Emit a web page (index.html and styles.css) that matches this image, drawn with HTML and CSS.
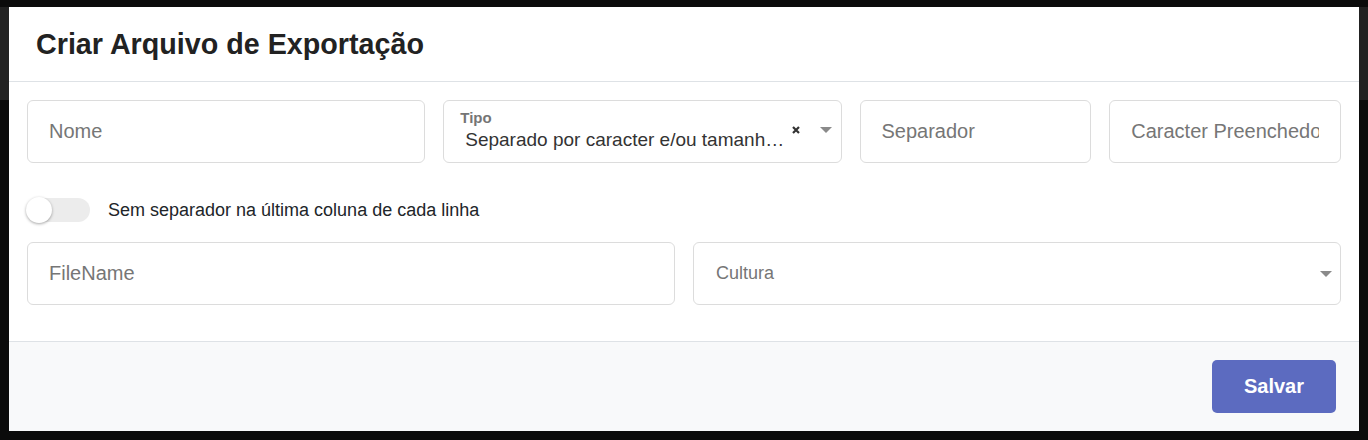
FILE: index.html
```html
<!DOCTYPE html>
<html lang="pt-BR">
<head>
<meta charset="utf-8">
<title>Criar Arquivo de Exportação</title>
<link rel="stylesheet" href="styles.css">
</head>
<body>
<div class="modal">
  <div class="modal-header">
    <h1 class="modal-title">Criar Arquivo de Exportação</h1>
  </div>
  <div class="modal-body">
    <div class="row">
      <div class="col c5"><input class="field input" type="text" placeholder="Nome"></div>
      <div class="col c5">
        <div class="field select">
          <div class="sel-main">
            <span class="sel-label">Tipo</span>
            <span class="sel-value">Separado por caracter e/ou tamanho fixo</span>
          </div>
          <svg class="sel-clear" width="8" height="8" viewBox="0 0 8 8"><path d="M1 1L7 7M7 1L1 7" stroke="#333" stroke-width="2.2"/></svg>
          <svg class="sel-arrow" width="12" height="6" viewBox="0 0 12 6"><path d="M0 0H12L6 6Z" fill="#8a8a8a"/></svg>
        </div>
      </div>
      <div class="col c3"><input class="field input" type="text" placeholder="Separador"></div>
      <div class="col c3"><input class="field input" type="text" placeholder="Caracter Preenchedor"></div>
    </div>
    <div class="switch-row">
      <span class="switch"><span class="knob"></span></span>
      <span class="switch-label">Sem separador na última coluna de cada linha</span>
    </div>
    <div class="row">
      <div class="col c8"><input class="field input" type="text" placeholder="FileName"></div>
      <div class="col c8">
        <div class="field select plain">
          <span class="sel-placeholder">Cultura</span>
          <svg class="sel-arrow" width="12" height="6" viewBox="0 0 12 6"><path d="M0 0H12L6 6Z" fill="#8a8a8a"/></svg>
        </div>
      </div>
    </div>
  </div>
  <div class="modal-footer">
    <button class="btn-primary" type="button">Salvar</button>
  </div>
</div>
</body>
</html>
```
FILE: styles.css
```css
* { box-sizing: border-box; }
html, body { height: 100%; }
body {
  margin: 0;
  overflow: hidden;
  font-family: "Liberation Sans", Arial, sans-serif;
  color: #212529;
  background: linear-gradient(to bottom, #0b0b0b 0, #0b0b0b 7px, #222 7px, #222 100px, #0b0b0b 100px);
}
.modal {
  margin: 7px 9px 0;
  width: 1350px;
  background: #fff;
}
.modal-header {
  height: 75px;
  padding: 0 27px;
  display: flex;
  align-items: center;
  border-bottom: 1px solid #dee2e6;
}
.modal-title {
  margin: 0;
  font-size: 28.7px;
  font-weight: 700;
  color: #222;
  line-height: 1.2;
}
.modal-body {
  padding: 18px 18px 18px;
}
.row {
  display: flex;
  margin: 0 -9px;
}
.col {
  padding: 0 9px;
  margin-bottom: 18px;
}
.c5 { width: 31.25%; }
.c3 { width: 18.75%; }
.c8 { width: 50%; }
.field {
  display: block;
  width: 100%;
  height: 63px;
  border: 1px solid #dcdcdc;
  border-radius: 6px;
  background: #fff;
}
.input {
  padding: 0 21px;
  font-family: inherit;
  font-size: 20px;
  color: #333;
  outline: none;
}
.input::placeholder { color: #767676; opacity: 1; }
.select {
  display: flex;
  align-items: center;
  padding: 0 9px 0 16px;
}
.sel-main {
  flex: 1;
  min-width: 0;
  align-self: flex-start;
  padding-top: 8px;
  display: flex;
  flex-direction: column;
}
.sel-label {
  font-size: 15px;
  line-height: 17px;
  font-weight: 700;
  color: #757575;
}
.sel-value {
  margin-top: 3px;
  padding-left: 5px;
  font-size: 19px;
  line-height: 22px;
  color: #333;
  white-space: nowrap;
  overflow: hidden;
  text-overflow: ellipsis;
}
.sel-clear {
  flex: none;
  margin-top: -3px;
  width: 8px;
  height: 8px;
}
.sel-arrow {
  flex: none;
  margin-left: 20px;
  margin-top: -4px;
}
.plain {
  padding: 0 8px 0 22px;
}
.plain .sel-placeholder {
  flex: 1;
  font-size: 18px;
  color: #767676;
}
.plain .sel-arrow { margin-top: 0; }
.switch-row {
  display: flex;
  align-items: center;
  gap: 18px;
  height: 43px;
  padding-top: 15px;
  margin-bottom: 18px;
}
.switch {
  position: relative;
  width: 63px;
  height: 24px;
  border-radius: 12px;
  background: #ececec;
  flex: none;
}
.knob {
  position: absolute;
  left: -1px;
  top: -1px;
  width: 26px;
  height: 26px;
  border-radius: 50%;
  background: #fff;
  box-shadow: 0 1px 3px rgba(0,0,0,0.35);
}
.switch-label {
  font-size: 18px;
  color: #212529;
}
.modal-footer {
  display: flex;
  justify-content: flex-end;
  padding: 18px 23px 18px;
  background: #f8f9fa;
  border-top: 1px solid #dee2e6;
}
.btn-primary {
  width: 124px;
  height: 53px;
  border: none;
  border-radius: 5px;
  background: #5c6bc0;
  color: #fff;
  font-family: inherit;
  font-size: 20px;
  font-weight: 700;
}
```
